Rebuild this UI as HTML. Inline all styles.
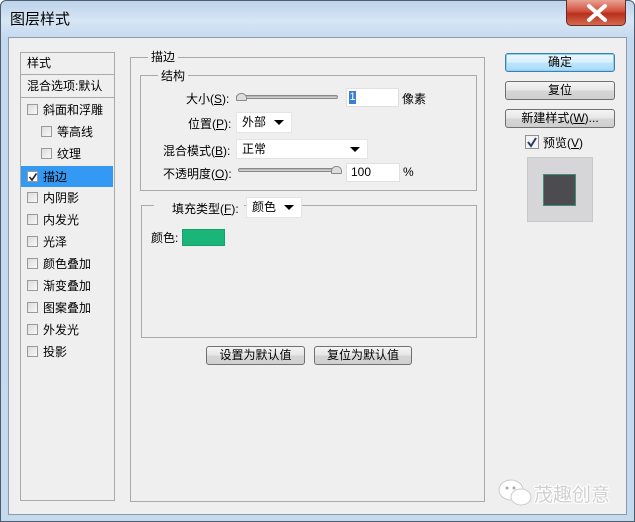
<!DOCTYPE html>
<html><head><meta charset="utf-8"><style>
*{margin:0;padding:0;box-sizing:border-box}
body{width:635px;height:522px;overflow:hidden;background:#fff;font-family:"Liberation Sans","Noto Sans CJK SC","WenQuanYi Zen Hei",sans-serif;font-size:12px;color:#000}
.a{position:absolute}
.win{left:0;top:0;width:635px;height:522px;background:linear-gradient(180deg,#bcd3ea 0,#d7e6f5 20px,#c4d8ee 38px,#c6daee 100%);border:1px solid #4d5c6e;border-radius:6px 6px 0 0}
.client{left:8px;top:37px;width:619px;height:478px;background:#f0eff0;border:1px solid #8a9bb0}
.close{left:566px;top:0;width:60px;height:26px;border:1px solid #6b2a25;border-top:none;border-radius:0 0 5px 5px;background:linear-gradient(180deg,#e8a294 0,#d2503c 45%,#b8301c 55%,#d56a4f 100%)}
.gb{border:1px solid #a9a9a9}
.lbl{background:#f0eff0;padding:0 3px}
.row{left:21px;width:92px;height:22px;line-height:22px;padding-left:6px}
.cb{display:inline-block;width:11px;height:11px;border:1px solid #9a9a9a;background:linear-gradient(135deg,#dcdcdc,#f8f8f8);vertical-align:-1px;margin-right:5px}
.btn{border:1px solid #707070;border-radius:3px;background:linear-gradient(180deg,#f4f4f4 0,#e6e6e6 50%,#d6d6d6 51%,#cfcfcf 100%);text-align:center;line-height:17px}
.inp{background:#fff;border:1px solid #e0e0e0}
.dd{background:#fff;border:1px solid #e4e4e4;line-height:18px;padding-left:5px}
.tri{position:absolute;right:7px;top:7px;width:0;height:0;border-left:5px solid transparent;border-right:5px solid transparent;border-top:5px solid #000}
.sl{height:4px;border:1px solid #888;border-radius:2px;background:linear-gradient(#aaa,#ddd)}
.thumb{width:11px;height:8px;background:#ddd;border:1px solid #888;border-radius:5px 5px 1px 1px}
</style></head><body>
<div class="a win"></div>
<div class="a" style="left:10px;top:8px;font-size:15px">图层样式</div>
<div class="a close"><svg width="60" height="26"><path d="M22 6 L38 20 M38 6 L22 20" stroke="#fff" stroke-width="4" stroke-linecap="round"/></svg></div>
<div class="a client"></div>

<div class="a gb" style="left:20px;top:52px;width:95px;height:449px;background:#f0eff0"></div>
<div class="a" style="left:21px;top:74px;width:93px;height:1px;background:#a9a9a9"></div>
<div class="a" style="left:21px;top:97px;width:93px;height:1px;background:#a9a9a9"></div>
<div class="a" style="left:27px;top:53px;line-height:20px">样式</div>
<div class="a" style="left:27px;top:76px;line-height:20px">混合选项:默认</div>
<div class="a row" style="top:99px"><span class="cb"></span>斜面和浮雕</div>
<div class="a row" style="top:121px;padding-left:20px"><span class="cb"></span>等高线</div>
<div class="a row" style="top:143px;padding-left:20px"><span class="cb"></span>纹理</div>
<div class="a row" style="top:166px;background:#3399f3;height:21px"><span class="cb" style="background:#fff;position:relative"><svg class="a" style="left:0;top:0" width="10" height="10"><path d="M1.5 5 L4 8 L8.5 1.5" stroke="#223" stroke-width="1.6" fill="none"/></svg></span>描边</div>
<div class="a row" style="top:187px"><span class="cb"></span>内阴影</div>
<div class="a row" style="top:209px"><span class="cb"></span>内发光</div>
<div class="a row" style="top:231px"><span class="cb"></span>光泽</div>
<div class="a row" style="top:253px"><span class="cb"></span>颜色叠加</div>
<div class="a row" style="top:275px"><span class="cb"></span>渐变叠加</div>
<div class="a row" style="top:297px"><span class="cb"></span>图案叠加</div>
<div class="a row" style="top:319px"><span class="cb"></span>外发光</div>
<div class="a row" style="top:341px"><span class="cb"></span>投影</div>

<div class="a gb" style="left:130px;top:57px;width:355px;height:445px"></div>
<div class="a lbl" style="left:148px;top:48px">描边</div>
<div class="a gb" style="left:140px;top:75px;width:337px;height:116px"></div>
<div class="a lbl" style="left:158px;top:67px">结构</div>

<div class="a" style="left:186px;top:90px">大小(<u>S</u>):</div>
<div class="a sl" style="left:236px;top:95px;width:102px"></div>
<div class="a thumb" style="left:236px;top:93px"></div>
<div class="a inp" style="left:346px;top:88px;width:53px;height:19px"></div>
<div class="a" style="left:349px;top:91px;width:7px;height:13px;background:#3b7fd0;color:#fff;font-size:11px;line-height:13px;text-align:center">1</div>
<div class="a" style="left:402px;top:90px">像素</div>

<div class="a" style="left:188px;top:115px">位置(<u>P</u>):</div>
<div class="a dd" style="left:236px;top:112px;width:56px;height:21px">外部<span class="tri"></span></div>

<div class="a" style="left:163px;top:142px">混合模式(<u>B</u>):</div>
<div class="a dd" style="left:236px;top:139px;width:132px;height:20px">正常<span class="tri"></span></div>

<div class="a" style="left:163px;top:165px">不透明度(<u>O</u>):</div>
<div class="a sl" style="left:238px;top:168px;width:100px"></div>
<div class="a thumb" style="left:331px;top:166px"></div>
<div class="a inp" style="left:346px;top:163px;width:54px;height:19px;padding-left:4px;line-height:17px">100</div>
<div class="a" style="left:403px;top:165px">%</div>

<div class="a gb" style="left:141px;top:205px;width:336px;height:133px"></div>
<div class="a lbl" style="left:154px;top:199px;width:90px;height:14px"></div>
<div class="a" style="left:172px;top:200px">填充类型(<u>F</u>):</div>
<div class="a dd" style="left:246px;top:197px;width:56px;height:21px;background:#fff">颜色<span class="tri"></span></div>
<div class="a" style="left:151px;top:229px">颜色:</div>
<div class="a" style="left:182px;top:229px;width:43px;height:17px;background:#1bb57a;border:1px solid #13a06a"></div>

<div class="a btn" style="left:206px;top:346px;width:99px;height:19px">设置为默认值</div>
<div class="a btn" style="left:314px;top:346px;width:98px;height:19px">复位为默认值</div>

<div class="a btn" style="left:505px;top:53px;width:110px;height:19px;border-color:#3c7fb1;box-shadow:0 0 0 1px #8fd0f0 inset;background:linear-gradient(180deg,#eaf6fd 0,#d9f0fc 50%,#bee6fd 51%,#a7d9f5 100%)">确定</div>
<div class="a btn" style="left:505px;top:81px;width:110px;height:19px">复位</div>
<div class="a btn" style="left:505px;top:109px;width:110px;height:19px">新建样式(<u>W</u>)...</div>
<div class="a" style="left:525px;top:135px;width:14px;height:14px;border:1px solid #8e8f8f;background:#f4f4f4"><svg width="12" height="12"><path d="M2 6 L5 10 L10 2" stroke="#2b3d66" stroke-width="2" fill="none"/></svg></div>
<div class="a" style="left:543px;top:134px">预览(<u>V</u>)</div>
<div class="a" style="left:527px;top:157px;width:66px;height:65px;background:#d6d6d8;border:1px solid #c8c8c8"></div>
<div class="a" style="left:543px;top:174px;width:33px;height:32px;background:#4c4b4f;border:1px solid #3e8f7a"></div>

<svg class="a" style="left:497px;top:478px" width="38" height="30"><ellipse cx="14" cy="12" rx="12" ry="10" fill="#fff" stroke="#ccc"/><ellipse cx="24" cy="19" rx="10" ry="8" fill="#fff" stroke="#ccc"/><circle cx="10" cy="10" r="1.5" fill="#aaa"/><circle cx="17" cy="10" r="1.5" fill="#aaa"/></svg>
<div class="a" style="left:534px;top:480px;font-size:19px;color:#d0d0d0;text-shadow:1px 1px 0 #fff,-1px -1px 0 #fff,1px -1px 0 #fff,-1px 1px 0 #fff">茂趣创意</div>
</body></html>
